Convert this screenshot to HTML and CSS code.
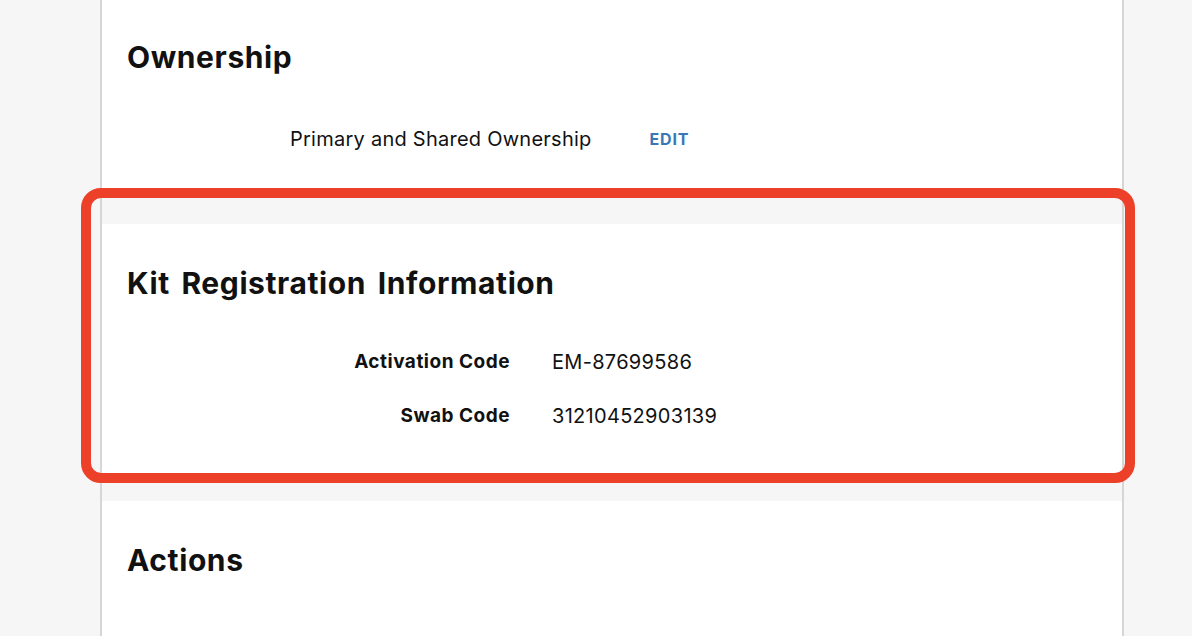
FILE: index.html
```html
<!DOCTYPE html>
<html>
<head>
<meta charset="utf-8">
<link rel="stylesheet" href="styles.css">
</head>
<body>
<div class="page">
  <main class="column">
    <section class="card card-ownership">
      <h2 class="card-title">Ownership</h2>
      <div class="owner-row">
        <span class="owner-text">Primary and Shared Ownership</span>
        <a class="edit-link">EDIT</a>
      </div>
    </section>
    <section class="card card-kit">
      <h2 class="card-title">Kit Registration Information</h2>
      <dl class="info-grid">
        <dt class="info-label">Activation Code</dt>
        <dd class="info-value">EM-87699586</dd>
        <dt class="info-label">Swab Code</dt>
        <dd class="info-value">31210452903139</dd>
      </dl>
    </section>
    <section class="card card-actions">
      <h2 class="card-title">Actions</h2>
    </section>
  </main>
  <div class="highlight"></div>
</div>
</body>
</html>
```

FILE: styles.css
```css
html, body {
  margin: 0;
  padding: 0;
  height: 100%;
  overflow: hidden;
}
body {
  background: #f6f6f6;
  font-family: Inter, "Noto Sans", "Liberation Sans", sans-serif;
  color: #111;
}
.page {
  position: relative;
  height: 636px;
}
.column {
  margin-left: 100px;
  width: 1020px;
  height: 700px;
  margin-top: -2px;
  border-left: 2px solid #d6d6d6;
  border-right: 2px solid #d6d6d6;
  display: flex;
  flex-direction: column;
  gap: 28px;
}
.card {
  background: #fff;
  padding: 40px 25px 42px;
}
.card-title {
  margin: 0;
  font-size: 30px;
  line-height: 39px;
  font-weight: 700;
  letter-spacing: 0.6px;
  word-spacing: 4px;
}
.owner-row {
  display: flex;
  align-items: center;
  margin-top: 47px;
  padding-left: 163px;
  height: 30px;
  gap: 58px;
}
.owner-text {
  font-size: 20px;
  font-weight: 400;
  letter-spacing: 0.25px;
}
.edit-link {
  color: #3a78b5;
  font-size: 16px;
  font-weight: 700;
  letter-spacing: 0.8px;
}
.info-grid {
  display: grid;
  grid-template-columns: 383px 1fr;
  column-gap: 42px;
  row-gap: 24px;
  margin: 44px 0 0;
}
.info-label {
  text-align: right;
  font-size: 19px;
  font-weight: 700;
  line-height: 30px;
  letter-spacing: 0.5px;
  margin: 0;
}
.info-value {
  font-size: 20px;
  line-height: 30px;
  letter-spacing: 0.3px;
  margin: 0;
}
.card-actions {
  flex: 1;
}
.highlight {
  position: absolute;
  left: 81px;
  top: 190px;
  width: 1054px;
  height: 295px;
  box-sizing: border-box;
  border: 10px solid #ec4128;
  border-radius: 20px;
}
```
